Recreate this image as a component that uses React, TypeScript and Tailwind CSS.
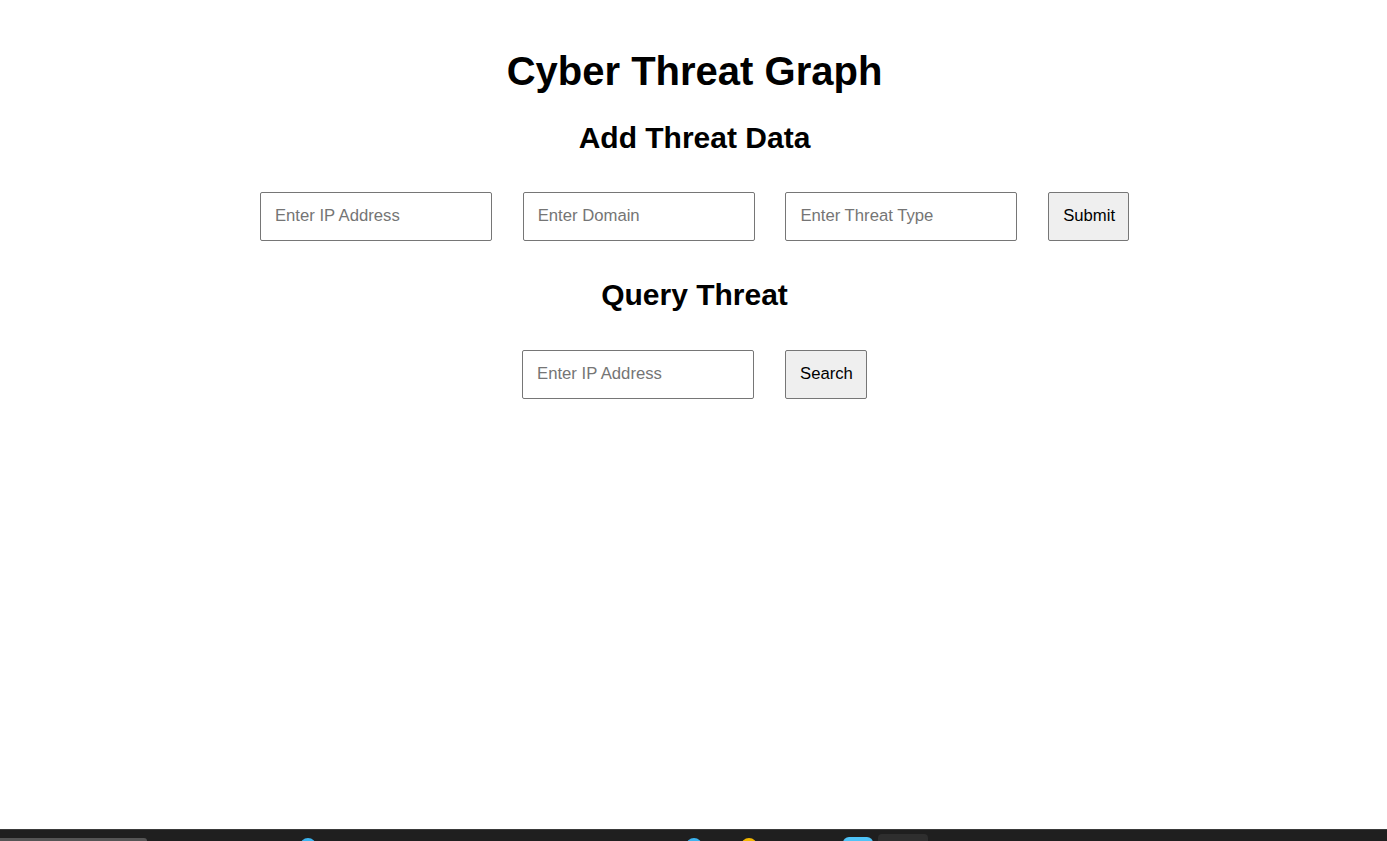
import React, { useState } from 'react';

const App: React.FC = () => {
  const [ip, setIp] = useState('');
  const [domain, setDomain] = useState('');
  const [threatType, setThreatType] = useState('');
  const [queryIp, setQueryIp] = useState('');

  const inputCls =
    'w-[232px] h-[49px] px-[14px] pb-[1px] text-[16.7px] text-black bg-white border border-[#767676] rounded-[2px] outline-none placeholder:text-[#757575]';
  const btnCls =
    'h-[49px] px-[14px] pb-[1px] text-[16.7px] text-black bg-[#efefef] border border-[#767676] rounded-[2px]';

  return (
    <div className="min-h-screen bg-white flex flex-col font-['Liberation_Sans',Arial,sans-serif] text-black">
      <main className="flex-1 flex flex-col items-center pt-[48px] pl-[2px]">
        <h1 className="text-[40px] font-bold leading-[46px]">Cyber Threat Graph</h1>

        <h2 className="mt-[27px] text-[30px] font-bold leading-[34px]">Add Threat Data</h2>
        <div className="mt-[37px] flex items-center gap-[30.75px]">
          <input className={inputCls} placeholder="Enter IP Address" value={ip} onChange={e => setIp(e.target.value)} />
          <input className={inputCls} placeholder="Enter Domain" value={domain} onChange={e => setDomain(e.target.value)} />
          <input className={inputCls} placeholder="Enter Threat Type" value={threatType} onChange={e => setThreatType(e.target.value)} />
          <button className={`${btnCls} w-[81px]`}>Submit</button>
        </div>

        <h2 className="mt-[37px] text-[30px] font-bold leading-[34px]">Query Threat</h2>
        <div className="mt-[38px] flex items-center gap-[31px]">
          <input className={inputCls} placeholder="Enter IP Address" value={queryIp} onChange={e => setQueryIp(e.target.value)} />
          <button className={`${btnCls} w-[82px]`}>Search</button>
        </div>
      </main>

      {/* taskbar strip peeking in at the bottom */}
      <div className="h-[12px] bg-[#1f1f1f] border-t border-[#3a3a3a] flex items-end relative overflow-hidden">
        <div className="absolute left-0 bottom-0 w-[147px] h-[3px] bg-[#555] rounded-tr-[3px]" />
        <div className="absolute left-[300px] top-[8px] w-[16px] h-[16px] rounded-full bg-[#3cb4f0]" />
        <div className="absolute left-[686px] top-[8px] w-[16px] h-[16px] rounded-full bg-[#3cb4f0]" />
        <div className="absolute left-[741px] top-[8px] w-[16px] h-[16px] rounded-full bg-[#f5b800]" />
        <div className="absolute left-[843px] top-[7px] w-[30px] h-[16px] rounded-[6px] bg-[#4fc3f7]" />
        <div className="absolute left-[878px] top-[4px] w-[50px] h-[16px] rounded-[4px] bg-[#2e2e2e]" />
      </div>
    </div>
  );
};

export default App;
